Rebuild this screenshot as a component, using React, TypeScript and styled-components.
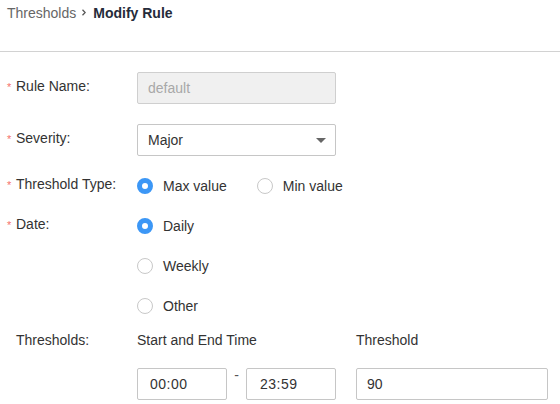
import React from "react";
import styled, { createGlobalStyle } from "styled-components";

const GlobalStyle = createGlobalStyle`
  html, body { margin: 0; padding: 0; background: #fff; }
  body {
    font-family: "Liberation Sans", Arial, sans-serif;
    font-size: 14px;
    color: #333;
  }
  * { box-sizing: border-box; }
`;

const Page = styled.div`
  width: 560px;
  height: 404px;
  overflow: hidden;
  background: #fff;
`;

const Header = styled.div`
  height: 52px;
  border-bottom: 1px solid #d2d2d2;
  padding: 3px 7px 0;
  display: flex;
  align-items: flex-start;
`;

const Crumbs = styled.div`
  display: flex;
  align-items: center;
  height: 20px;
  line-height: 20px;
`;

const CrumbLink = styled.span`
  color: #666;
`;

const CrumbSep = styled.span`
  display: inline-flex;
  margin: 0 7px 0 6px;
  padding-bottom: 2px;
`;

const CrumbCurrent = styled.span`
  color: #252b3a;
  font-weight: bold;
`;

const Form = styled.div`
  padding: 20px 0 0 7px;
  display: flex;
  flex-direction: column;
`;

const Item = styled.div<{ $mb: number }>`
  display: grid;
  grid-template-columns: 130px auto;
  margin-bottom: ${(p) => p.$mb}px;
`;

const Label = styled.div`
  display: flex;
  align-items: flex-start;
  padding-top: 4px;
  line-height: 20px;
  color: #333;
`;

const Star = styled.span`
  width: 9px;
  height: 20px;
  padding-top: 4px;
  color: #f5726c;
  font-size: 11px;
  line-height: 14px;
`;

const TextInput = styled.input<{ $w: number; $pl?: number; $ls?: number }>`
  width: ${(p) => p.$w}px;
  height: 32px;
  border: 1px solid #c6c6c6;
  border-radius: 2px;
  padding: 0 0 0 ${(p) => p.$pl ?? 10}px;
  font-family: "Liberation Sans", Arial, sans-serif;
  font-size: 14px;
  letter-spacing: ${(p) => p.$ls ?? 0}px;
  color: #333;
  background: #fff;
  outline: none;
  &:disabled {
    background: #f0f0f0;
    color: #a8a8a8;
    border-color: #cfcfcf;
  }
`;

const Select = styled.div`
  width: 199px;
  height: 32px;
  border: 1px solid #c6c6c6;
  border-radius: 2px;
  padding: 0 9px 0 10px;
  display: flex;
  align-items: center;
  justify-content: space-between;
  color: #333;
`;

const Caret = styled.span`
  width: 0;
  height: 0;
  border-left: 5px solid transparent;
  border-right: 5px solid transparent;
  border-top: 5px solid #666;
`;

const RadioGroup = styled.div<{ $column?: boolean }>`
  display: flex;
  flex-direction: ${(p) => (p.$column ? "column" : "row")};
  gap: ${(p) => (p.$column ? "8px" : "30px")};
`;

const RadioOption = styled.label`
  display: flex;
  align-items: center;
  height: 32px;
  gap: 10px;
  color: #333;
  cursor: pointer;
`;

const RadioDot = styled.span<{ $checked: boolean }>`
  width: 16px;
  height: 16px;
  border-radius: 50%;
  border: ${(p) => (p.$checked ? "5px solid #3c97f6" : "1px solid #c8c8c8")};
  background: #fff;
  flex: none;
`;

const ThresholdGrid = styled.div`
  display: grid;
  grid-template-columns: 199px 192px;
  column-gap: 20px;
  row-gap: 18px;
`;

const ColHead = styled.div`
  padding-top: 4px;
  line-height: 20px;
  color: #333;
`;

const TimeRange = styled.div`
  display: flex;
  align-items: flex-start;
`;

const Dash = styled.span`
  width: 19px;
  text-align: center;
  line-height: 14px;
  color: #555;
`;

function Radio({ checked, label }: { checked: boolean; label: string }) {
  return (
    <RadioOption>
      <RadioDot $checked={checked} />
      <span>{label}</span>
    </RadioOption>
  );
}

export default function App() {
  return (
    <Page>
      <GlobalStyle />
      <Header>
        <Crumbs>
          <CrumbLink>Thresholds</CrumbLink>
          <CrumbSep>
            <svg width="4" height="7" viewBox="0 0 4 7">
              <polyline points="0.5,0.8 3.2,3.5 0.5,6.2" fill="none" stroke="#555" strokeWidth="1.3" />
            </svg>
          </CrumbSep>
          <CrumbCurrent>Modify Rule</CrumbCurrent>
        </Crumbs>
      </Header>
      <Form>
        <Item $mb={20}>
          <Label>
            <Star>*</Star>Rule Name:
          </Label>
          <TextInput $w={199} value="default" disabled readOnly />
        </Item>
        <Item $mb={14}>
          <Label>
            <Star>*</Star>Severity:
          </Label>
          <Select>
            <span>Major</span>
            <Caret />
          </Select>
        </Item>
        <Item $mb={8}>
          <Label>
            <Star>*</Star>Threshold Type:
          </Label>
          <RadioGroup>
            <Radio checked label="Max value" />
            <Radio checked={false} label="Min value" />
          </RadioGroup>
        </Item>
        <Item $mb={4}>
          <Label>
            <Star>*</Star>Date:
          </Label>
          <RadioGroup $column>
            <Radio checked label="Daily" />
            <Radio checked={false} label="Weekly" />
            <Radio checked={false} label="Other" />
          </RadioGroup>
        </Item>
        <Item $mb={0}>
          <Label>
            <Star />Thresholds:
          </Label>
          <ThresholdGrid>
            <ColHead>Start and End Time</ColHead>
            <ColHead>Threshold</ColHead>
            <TimeRange>
              <TextInput $w={90} $pl={12} $ls={0.5} value="00:00" readOnly />
              <Dash>-</Dash>
              <TextInput $w={90} $pl={13} $ls={0.5} value="23:59" readOnly />
            </TimeRange>
            <TextInput $w={192} value="90" readOnly />
          </ThresholdGrid>
        </Item>
      </Form>
    </Page>
  );
}
